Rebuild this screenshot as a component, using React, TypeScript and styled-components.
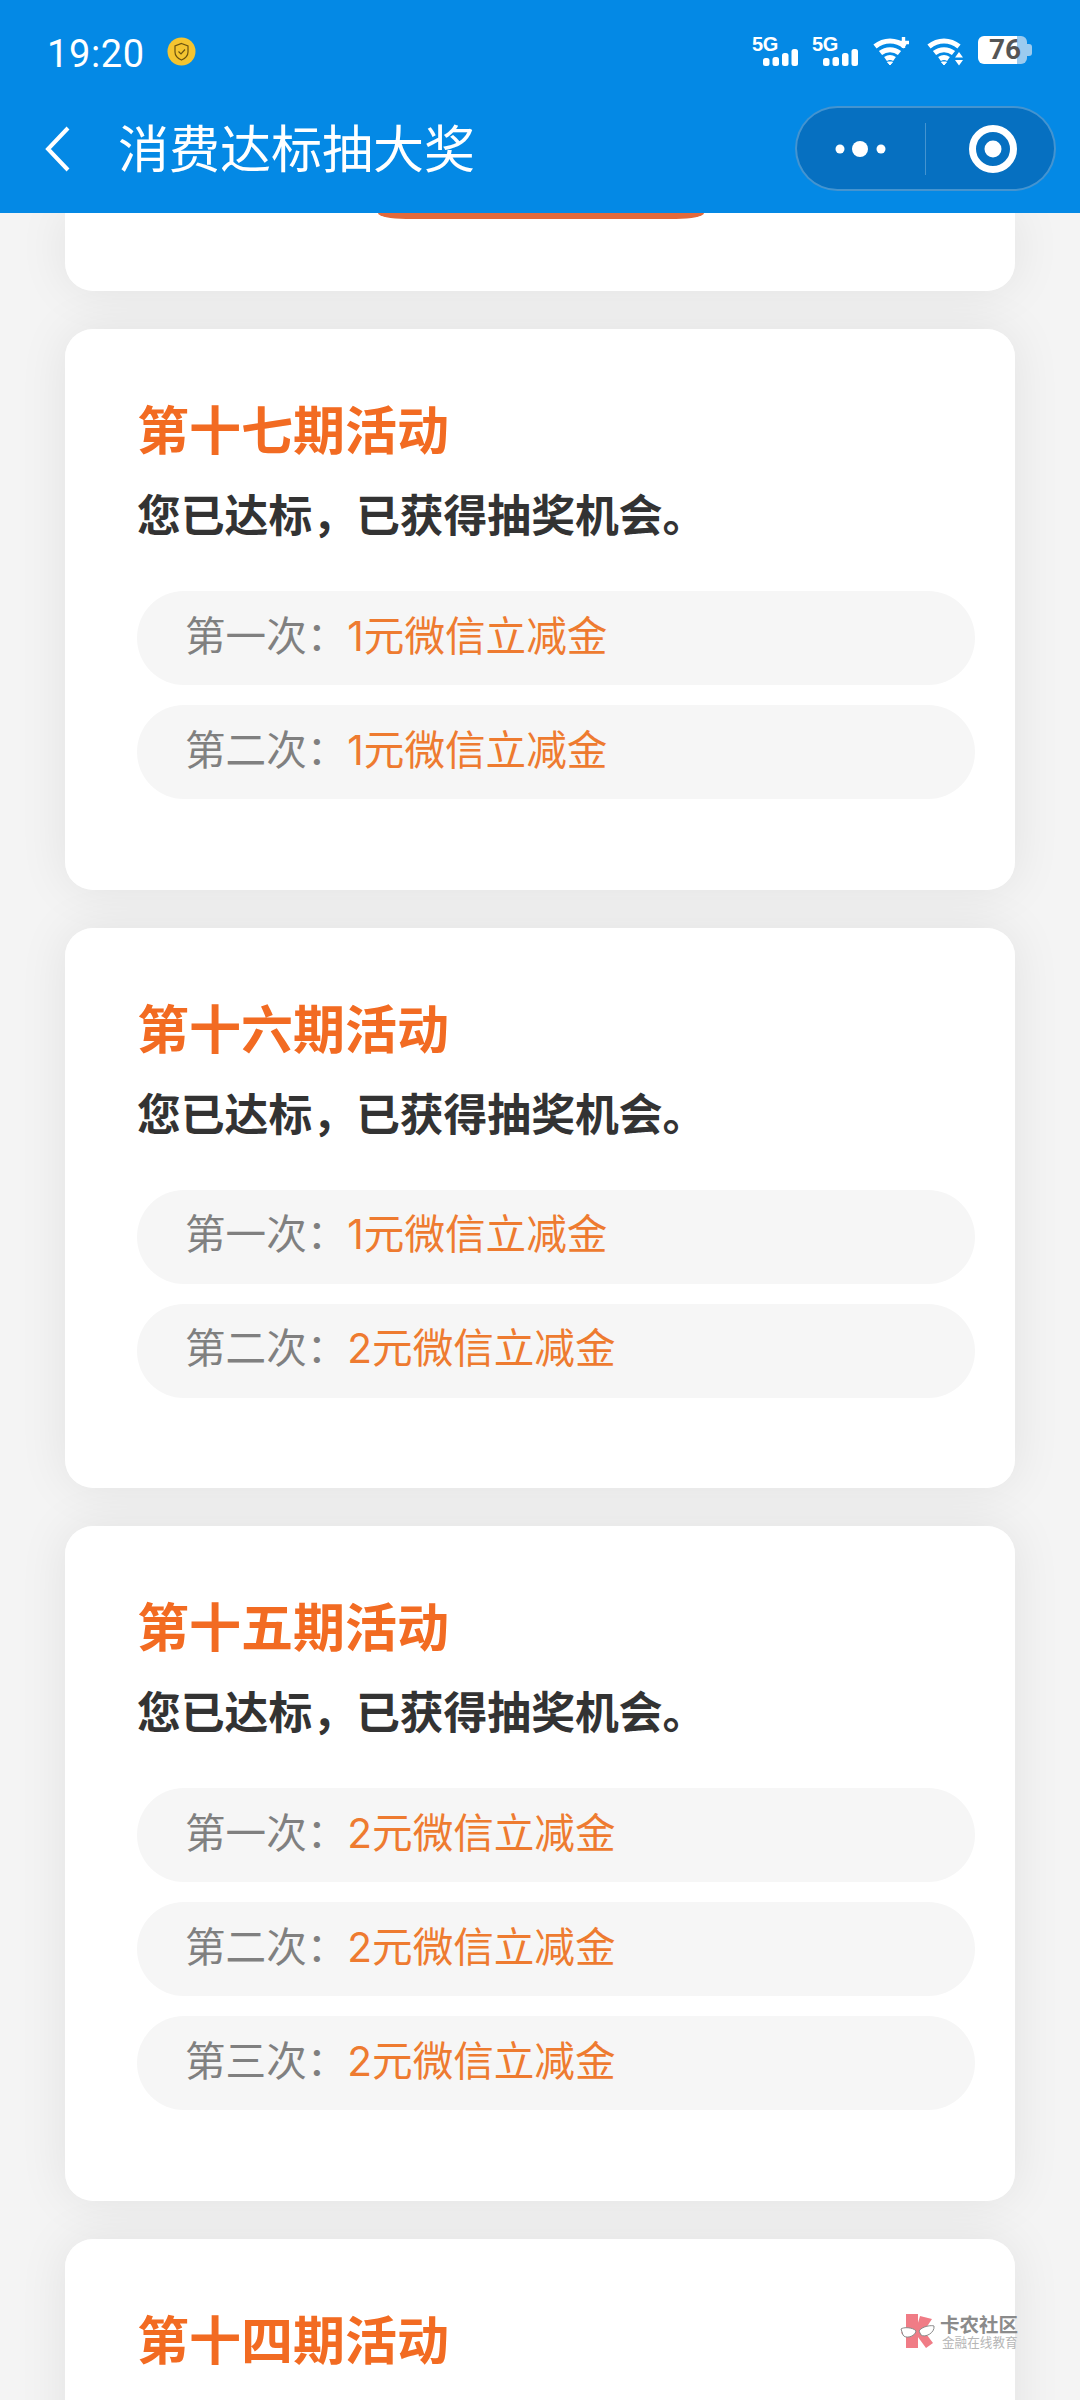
import React from "react";
import styled, { createGlobalStyle } from "styled-components";

const Global = createGlobalStyle`
  html, body { margin: 0; padding: 0; background: #f4f4f4; }
  * { box-sizing: border-box; }
  body { font-family: "Noto Sans CJK SC", "Noto Sans", sans-serif; }
`;

const Page = styled.div`
  position: relative;
  width: 1080px;
  height: 2400px;
  overflow: hidden;
  background: #f4f4f4;
  display: flex;
  flex-direction: column;
`;

const Header = styled.header`
  flex: none;
  position: relative;
  z-index: 2;
  height: 213px;
  background: #0489e5;
  color: #fff;
  display: flex;
  flex-direction: column;
`;

const StatusBar = styled.div`
  height: 106px;
  padding: 32px 48px 0 47px;
  display: flex;
  align-items: flex-start;
`;

const Time = styled.span`
  font-family: Roboto, sans-serif;
  font-size: 38px;
  line-height: 44px;
  letter-spacing: 0.6px;
`;

const Shield = styled.svg`
  margin: 5px 0 0 22px;
  width: 29px;
  height: 29px;
`;

const StatusIcons = styled.div`
  margin-left: auto;
  margin-top: 4px;
  display: flex;
  align-items: flex-start;
  gap: 12px;
`;

const Signal = styled.div`
  width: 48px;
  display: flex;
  flex-direction: column;
`;

const SignalLabel = styled.span`
  font-family: "Liberation Sans", sans-serif;
  font-weight: 700;
  font-size: 20px;
  line-height: 16px;
  letter-spacing: -0.4px;
  margin-left: 1px;
`;

const Bars = styled.svg`
  align-self: flex-end;
  margin-top: -3px;
  width: 36px;
  height: 17px;
`;

const Wifi = styled.svg<{ $gap?: number }>`
  width: 38px;
  height: 30px;
  margin-left: ${(p) => p.$gap ?? 0}px;
`;

const Battery = styled.div`
  width: 54px;
  height: 28px;
  margin-left: 3px;
  display: flex;
`;

const BatteryBody = styled.div`
  width: 49px;
  height: 28px;
  border-radius: 6px;
  background: linear-gradient(90deg, #fff 0 80%, #9ccbef 80% 100%);
  color: #555;
  font-family: Roboto, sans-serif;
  font-weight: 700;
  font-size: 28px;
  line-height: 28px;
  padding-left: 11px;
`;

const BatteryNub = styled.div`
  align-self: center;
  width: 5px;
  height: 12px;
  border-radius: 0 3px 3px 0;
  background: #9ccbef;
`;

const NavBar = styled.div`
  flex: 1;
  display: flex;
  align-items: flex-start;
  padding: 0 24px 0 45px;
`;

const Back = styled.svg`
  margin-top: 20px;
  width: 26px;
  height: 46px;
`;

const NavTitle = styled.h1`
  margin: 10px 0 0 47px;
  font-size: 51px;
  line-height: 60px;
  font-weight: 400;
  color: #fff;
`;

const Capsule = styled.div`
  margin-left: auto;
  width: 261px;
  height: 85px;
  border-radius: 43px;
  background: #0670c1;
  border: 2px solid rgba(255, 255, 255, 0.25);
  display: flex;
  align-items: center;
`;

const CapsulePart = styled.div<{ $inset?: number }>`
  flex: 1 1 128px;
  height: 52px;
  padding-left: ${(p) => p.$inset ?? 0}px;
  display: flex;
  align-items: center;
  justify-content: center;
`;

const CapsuleDivider = styled.div`
  width: 1px;
  height: 52px;
  background: rgba(255, 255, 255, 0.25);
`;

const List = styled.main`
  flex: 1;
  min-height: 0;
  padding: 0 65px;
  display: flex;
  flex-direction: column;
  gap: 38px;
  isolation: isolate;
`;

const Panel = styled.div`
  position: relative;
  flex: none;
  background: #fff;

  &::before {
    content: "";
    position: absolute;
    inset: 0;
    z-index: -1;
    border-radius: inherit;
    box-shadow: 0 0 50px rgba(0, 0, 0, 0.08);
  }
`;

const Stub = styled(Panel)`
  height: 78px;
  border-radius: 0 0 28px 28px;
  display: flex;
  justify-content: center;
`;

const StubButton = styled.div`
  width: 326px;
  height: 6px;
  background: #e3693a;
  border-radius: 0 0 28px 28px / 0 0 6px 6px;
  margin-left: 2px;
`;

const Card = styled(Panel)`
  border-radius: 28px;
  padding: 63px 40px 90.5px 72px;
`;

const CardTitle = styled.h2`
  margin: 0;
  font-size: 52px;
  line-height: 72px;
  font-weight: 700;
  color: #f26b22;
`;

const CardSub = styled.p`
  margin: 19px 0 48px;
  font-size: 43.8px;
  line-height: 60px;
  font-weight: 700;
  color: #333;
`;

const Prizes = styled.ul`
  margin: 0;
  padding: 0;
  list-style: none;
  display: flex;
  flex-direction: column;
  gap: 20px;
`;

const Prize = styled.li`
  height: 94px;
  border-radius: 47px;
  background: #f6f6f6;
  padding: 0 0 3px 48px;
  display: flex;
  align-items: center;
  font-family: Inter, "Noto Sans CJK SC", sans-serif;
  font-size: 40.6px;
  line-height: 56px;
`;

const PrizeLabel = styled.span`
  color: #808080;
`;

const PrizeValue = styled.span`
  color: #ee7b30;
`;

const Watermark = styled.div`
  position: absolute;
  z-index: 1;
  left: 900px;
  top: 2313px;
  display: flex;
  gap: 4px;
  opacity: 0.85;
`;

const WatermarkText = styled.div`
  display: flex;
  flex-direction: column;
`;

const WatermarkName = styled.span`
  font-size: 19.5px;
  line-height: 22px;
  font-weight: 700;
  color: #777;
`;

const WatermarkTag = styled.span`
  font-size: 12.6px;
  line-height: 14px;
  color: #aaa;
  margin-left: 2px;
`;

const periods = [
  { title: "第十七期活动", prizes: ["1元微信立减金", "1元微信立减金"] },
  { title: "第十六期活动", prizes: ["1元微信立减金", "2元微信立减金"] },
  { title: "第十五期活动", prizes: ["2元微信立减金", "2元微信立减金", "2元微信立减金"] },
  { title: "第十四期活动", prizes: [] as string[] },
];

const ordinals = ["第一次：", "第二次：", "第三次："];

const SignalIcon = () => (
  <Signal>
    <SignalLabel>5G</SignalLabel>
    <Bars viewBox="0 0 36 17">
      <rect x="0" y="9" width="6.5" height="8" rx="2.5" fill="#fff" />
      <rect x="9.5" y="8" width="6.5" height="9" rx="2.5" fill="#fff" />
      <rect x="19" y="4" width="6.5" height="13" rx="2.5" fill="#fff" />
      <rect x="28.5" y="0" width="6.5" height="17" rx="2.5" fill="#fff" />
    </Bars>
  </Signal>
);

const WifiArcs = () => (
  <g fill="none" stroke="#fff" strokeWidth="5" transform="translate(2 0)">
    <path d="M2 10.5 C11 3 23 3 32 10.5" />
    <path d="M7.5 17 C13 12.5 21 12.5 26.5 17" />
    <path d="M12.5 23 C15.5 21 18.5 21 21.5 23" />
    <path d="M14.5 26 L17 29 L19.5 26 Z" fill="#fff" strokeWidth="1" />
  </g>
);

const Logo = () => (
  <svg width="36" height="36" viewBox="0 0 36 36">
    <path d="M6 1 H18 V35 H6 V24 L1 20 L6 14 Z" fill="#ee6672" />
    <path d="M20 3 L32 6 L24 18 L33 30 L26 35 L15 20 Z" fill="#ee6672" />
    <path d="M1 16 C3 14 13 14 16 18 C15 24 5 26 3 22 Z" fill="#fff" stroke="#777" strokeWidth="1" />
    <path d="M19 18 C22 13 32 12 34 13 C35 20 25 25 21 22 Z" fill="#fff" stroke="#777" strokeWidth="1" />
  </svg>
);

export default function App() {
  return (
    <Page>
      <Global />
      <Header>
        <StatusBar>
          <Time>19:20</Time>
          <Shield viewBox="0 0 29 29">
            <circle cx="14.5" cy="14.5" r="14" fill="#f4c430" />
            <path d="M14.5 6.5 L21 9 V15 C21 19 18 21.5 14.5 23 C11 21.5 8 19 8 15 V9 Z" fill="none" stroke="#6b5310" strokeWidth="1.2" />
            <path d="M11.5 14.5 L14 17 L18 12.5" fill="none" stroke="#6b5310" strokeWidth="1.2" />
          </Shield>
          <StatusIcons>
            <SignalIcon />
            <SignalIcon />
            <Wifi viewBox="0 0 38 30">
              <WifiArcs />
              <path d="M27 6.5 H38 M32.5 1 V12" stroke="#fff" strokeWidth="3.4" fill="none" />
            </Wifi>
            <Wifi viewBox="0 0 38 30" $gap={4}>
              <WifiArcs />
              <path d="M34 16 L38 21.5 H30 Z M30 24 H38 L34 29.5 Z" fill="#fff" />
            </Wifi>
            <Battery>
              <BatteryBody>76</BatteryBody>
              <BatteryNub />
            </Battery>
          </StatusIcons>
        </StatusBar>
        <NavBar>
          <Back viewBox="0 0 26 46">
            <path d="M23 2 L3 23 L23 44" fill="none" stroke="#fff" strokeWidth="4" />
          </Back>
          <NavTitle>消费达标抽大奖</NavTitle>
          <Capsule>
            <CapsulePart>
              <svg width="54" height="20" viewBox="0 0 54 20">
                <circle cx="6" cy="10" r="4.5" fill="#fff" />
                <circle cx="26" cy="10" r="8" fill="#fff" />
                <circle cx="47" cy="10" r="4.5" fill="#fff" />
              </svg>
            </CapsulePart>
            <CapsuleDivider />
            <CapsulePart $inset={6}>
              <svg width="48" height="48" viewBox="0 0 48 48">
                <circle cx="24" cy="24" r="20.5" fill="none" stroke="#fff" strokeWidth="7" />
                <circle cx="24" cy="24" r="8.5" fill="#fff" />
              </svg>
            </CapsulePart>
          </Capsule>
        </NavBar>
      </Header>
      <List>
        <Stub>
          <StubButton />
        </Stub>
        {periods.map((period) => (
          <Card key={period.title}>
            <CardTitle>{period.title}</CardTitle>
            <CardSub>您已达标，已获得抽奖机会。</CardSub>
            <Prizes>
              {period.prizes.map((prize, i) => (
                <Prize key={i}>
                  <PrizeLabel>{ordinals[i]}</PrizeLabel>
                  <PrizeValue>{prize}</PrizeValue>
                </Prize>
              ))}
            </Prizes>
          </Card>
        ))}
      </List>
      <Watermark>
        <Logo />
        <WatermarkText>
          <WatermarkName>卡农社区</WatermarkName>
          <WatermarkTag>金融在线教育</WatermarkTag>
        </WatermarkText>
      </Watermark>
    </Page>
  );
}
